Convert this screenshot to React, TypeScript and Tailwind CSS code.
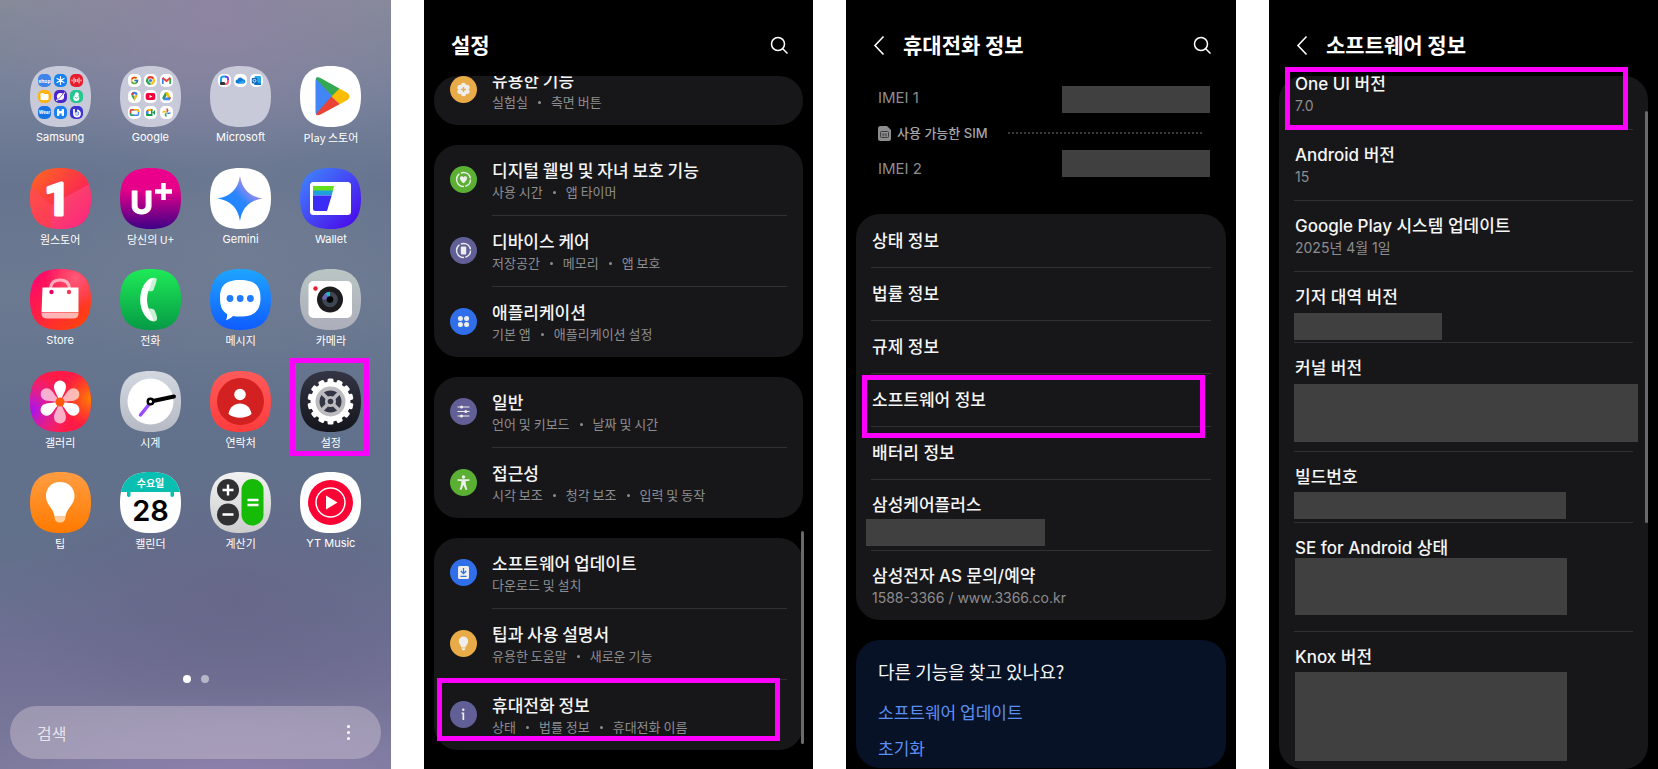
import type {ReactNode} from "react";
import {FcGoogle} from "react-icons/fc";

const SQUIRCLE = "M30.5 0C51.500 0 61 9.500 61 30.500S51.500 61 30.500 61 0 51.500 0 30.500 9.500 0 30.500 0Z";

export default function App() {
    return <main
        className="grid min-h-screen grid-cols-[391fr_389fr_390fr_389fr] gap-[33px] bg-white
            font-['Noto_Sans_CJK_KR',sans-serif]"
    >
        <SharedDefs/>
        <HomeScreen/>
        <SettingsScreen/>
        <AboutScreen/>
        <SoftwareScreen/>
    </main>
}

/* ---------- home ---------- */

interface AppEntry {
    name: string;
    icon: ReactNode;
    latin?: boolean;
    marked?: boolean;
}

const apps: AppEntry[] = [
    {name: "Samsung", icon: <SamsungFolder/>, latin: true},
    {name: "Google", icon: <GoogleFolder/>, latin: true},
    {name: "Microsoft", icon: <MicrosoftFolder/>, latin: true},
    {name: "Play 스토어", icon: <PlayIcon/>},
    {name: "원스토어", icon: <OneStoreIcon/>},
    {name: "당신의 U+", icon: <UplusIcon/>},
    {name: "Gemini", icon: <GeminiIcon/>, latin: true},
    {name: "Wallet", icon: <WalletIcon/>, latin: true},
    {name: "Store", icon: <StoreIcon/>, latin: true},
    {name: "전화", icon: <PhoneIcon/>},
    {name: "메시지", icon: <MessageIcon/>},
    {name: "카메라", icon: <CameraIcon/>},
    {name: "갤러리", icon: <GalleryIcon/>},
    {name: "시계", icon: <ClockIcon/>},
    {name: "연락처", icon: <ContactsIcon/>},
    {name: "설정", icon: <SettingsIcon/>, marked: true},
    {name: "팁", icon: <TipsIcon/>},
    {name: "캘린더", icon: <CalendarIcon/>},
    {name: "계산기", icon: <CalculatorIcon/>},
    {name: "YT Music", icon: <YtMusicIcon/>, latin: true},
];

function HomeScreen() {
    return <section
        className="flex flex-col
            bg-[radial-gradient(60%_20%_at_55%_2%,#8d84a2_0%,transparent_100%),radial-gradient(50%_16%_at_60%_33%,#707c92_0%,transparent_100%),radial-gradient(60%_16%_at_60%_78%,#67678a_0%,transparent_100%),radial-gradient(70%_12%_at_60%_102%,#8d80ad_0%,transparent_100%),linear-gradient(180deg,#858b98_0%,#76819a_12%,#66748f_24%,#6b7991_38%,#61708b_58%,#62708b_72%,#706f94_85%,#7b7a9b_100%)]"
    >
        <div className="mt-[66px] grid h-[485px] grid-cols-4 content-between px-[15px]">
            {apps.map(app => <button key={app.name} className="relative flex flex-col items-center gap-[2px]">
                {app.icon}
                <span
                    className={app.latin
                        ? "font-[Inter,'Noto_Sans_CJK_KR',sans-serif] text-[11px] leading-4 text-white"
                        : "text-[11px] leading-4 text-white"}
                >{app.name}</span>
                {app.marked && <Marker className="-top-[13px] -bottom-[6px] left-1 w-[79px]"/>}
            </button>)}
        </div>

        <div className="mt-[124px] flex justify-center gap-[10px]">
            <span className="size-2 rounded-full bg-white"/>
            <span className="size-2 rounded-full bg-white/50"/>
        </div>

        <div className="mx-[10px] mt-[23px] flex h-[53px] items-center rounded-full bg-[#cfc4d2]/45 pr-[27px] pl-[27px]">
            <input
                aria-label="검색"
                placeholder="검색"
                className="min-w-0 flex-1 bg-transparent text-base text-white outline-none placeholder:text-white/75"
            />
            <button aria-label="더보기" className="flex flex-col gap-[3px] px-1">
                <span className="size-[3px] rounded-full bg-white"/>
                <span className="size-[3px] rounded-full bg-white"/>
                <span className="size-[3px] rounded-full bg-white"/>
            </button>
        </div>
    </section>
}

/* ---------- settings ---------- */

function SettingsScreen() {
    return <section className="relative bg-black">
        <Header title="설정" search/>
        <div className="flex flex-col gap-5 px-[10px]">
            <div className="flex h-[49px] flex-col justify-end overflow-hidden rounded-3xl bg-[#17171a]">
                <SettingsRow
                    color="bg-[#e8ab47]" glyph={<FlowerGlyph/>}
                    title="유용한 기능" sub={["실험실", "측면 버튼"]}
                />
            </div>
            <div className="rounded-3xl bg-[#17171a]">
                <SettingsRow
                    color="bg-[#5bb034]" glyph={<WellbeingGlyph/>}
                    title="디지털 웰빙 및 자녀 보호 기능" sub={["사용 시간", "앱 타이머"]}
                />
                <SettingsRow
                    color="bg-[#615f96]" glyph={<DeviceGlyph/>}
                    title="디바이스 케어" sub={["저장공간", "메모리", "앱 보호"]}
                />
                <SettingsRow
                    color="bg-[#316fea]" glyph={<AppsGlyph/>}
                    title="애플리케이션" sub={["기본 앱", "애플리케이션 설정"]}
                />
            </div>
            <div className="rounded-3xl bg-[#17171a]">
                <SettingsRow
                    color="bg-[#615f96]" glyph={<SlidersGlyph/>}
                    title="일반" sub={["언어 및 키보드", "날짜 및 시간"]}
                />
                <SettingsRow
                    color="bg-[#5bb034]" glyph={<PersonGlyph/>}
                    title="접근성" sub={["시각 보조", "청각 보조", "입력 및 동작"]}
                />
            </div>
            <div className="rounded-3xl bg-[#17171a]">
                <SettingsRow
                    color="bg-[#316fea]" glyph={<UpdateGlyph/>}
                    title="소프트웨어 업데이트" sub={["다운로드 및 설치"]}
                />
                <SettingsRow
                    color="bg-[#e8ab47]" glyph={<BulbGlyph/>}
                    title="팁과 사용 설명서" sub={["유용한 도움말", "새로운 기능"]}
                />
                <SettingsRow
                    color="bg-[#615f96]" glyph={<InfoGlyph/>}
                    title="휴대전화 정보" sub={["상태", "법률 정보", "휴대전화 이름"]}
                    marked
                />
            </div>
        </div>
        <span className="absolute top-[531px] right-[9px] h-[213px] w-[3px] rounded-full bg-[#6a6a6c]"/>
    </section>
}

interface SettingsRowProps {
    color: string;
    glyph: ReactNode;
    title: string;
    sub: string[];
    marked?: boolean;
}

function SettingsRow({color, glyph, title, sub, marked}: SettingsRowProps) {
    return <button className="group relative flex w-full shrink-0 gap-[15px] px-4 text-left">
        <span className={`mt-[21px] size-[27px] shrink-0 rounded-full ${color}`}>
            <svg viewBox="0 0 27 27" className="size-full" fill="#eee" stroke="none">{glyph}</svg>
        </span>
        <span className="flex-1 border-b border-[#313133] py-[13px] group-last:border-b-0">
            <span className="block text-[17px] leading-6 font-medium text-[#f5f5f5]">{title}</span>
            <span className="flex gap-[10px] text-[13px] leading-5 text-[#8d8d8f]">
                {sub.map((part, i) => <span key={part} className="flex items-center gap-[10px]">
                    {i > 0 && <span className="size-[3px] rounded-full bg-[#8d8d8f]"/>}
                    {part}
                </span>)}
            </span>
        </span>
        {marked && <Marker className="-top-[2px] right-[23px] left-[3px] h-[63px]"/>}
    </button>
}

/* ---------- about phone ---------- */

function AboutScreen() {
    return <section className="bg-black">
        <Header title="휴대전화 정보" back search/>
        <div className="flex flex-col pr-[26px] pl-8 font-[Inter,'Noto_Sans_CJK_KR',sans-serif] text-[#8d8d8f]">
            <div className="flex justify-between pt-[10px]">
                <span className="text-[15px] leading-6">IMEI 1</span>
                <Redacted className="h-[27px] w-[148px]"/>
            </div>
            <div className="mt-[10px] mr-2 flex h-5 items-center">
                <SimIcon/>
                <span className="ml-[6px] text-[13px] leading-5 font-medium text-[#a5a5a7]">사용 가능한 SIM</span>
                <span className="ml-5 flex-1 border-b-2 border-dotted border-[#3a3a3c]"/>
            </div>
            <div className="mt-[7px] flex items-end justify-between">
                <span className="text-[15px] leading-4">IMEI 2</span>
                <Redacted className="h-[27px] w-[148px]"/>
            </div>
        </div>

        <div className="mx-[10px] mt-[37px] rounded-3xl bg-[#17171a] px-[15px] pt-px">
            <InfoRow title="상태 정보" single/>
            <InfoRow title="법률 정보" single/>
            <InfoRow title="규제 정보" single/>
            <InfoRow title="소프트웨어 정보" single>
                <Marker className="top-[1px] right-[6px] -left-[9px] h-[63px]"/>
            </InfoRow>
            <InfoRow title="배터리 정보" single/>
            <InfoRow title="삼성케어플러스" className="pb-1">
                <Redacted className="mt-[2px] -ml-[5px] h-[27px] w-[179px]"/>
            </InfoRow>
            <InfoRow title="삼성전자 AS 문의/예약" value="1588-3366 / www.3366.co.kr" className="pb-3"/>
        </div>

        <div className="mx-[10px] mt-5 flex flex-col rounded-3xl bg-[#081226] px-[22px] pt-[19px] pb-[2px]">
            <h2 className="mb-[11px] text-lg leading-6 text-[#f5f5f5]">다른 기능을 찾고 있나요?</h2>
            <a href="#update" className="text-[17px] leading-9 text-[#5c8ff5]">소프트웨어 업데이트</a>
            <a href="#reset" className="text-[17px] leading-9 text-[#5c8ff5]">초기화</a>
        </div>
    </section>
}

/* ---------- software info ---------- */

function SoftwareScreen() {
    return <section className="relative bg-black">
        <Header title="소프트웨어 정보" back/>
        <div className="mx-[10px] rounded-3xl bg-[#17171a] px-[15px]">
            <InfoRow title="One UI 버전" value="7.0" className="flex h-[54px] flex-col justify-end pb-[13px]">
                <Marker className="-top-[9px] right-[5px] -left-[9px] h-[63px]"/>
            </InfoRow>
            <InfoRow title="Android 버전" value="15" className="pb-[13px]"/>
            <InfoRow title="Google Play 시스템 업데이트" value="2025년 4월 1일" className="pb-[13px]"/>
            <InfoRow title="기저 대역 버전" className="pb-[2px]">
                <Redacted className="mt-1 h-[27px] w-[148px]"/>
            </InfoRow>
            <InfoRow title="커널 버전" className="pb-[9px]">
                <Redacted className="mt-1 -mr-[5px] h-[58px]"/>
            </InfoRow>
            <InfoRow title="빌드번호" className="pb-[3px]">
                <Redacted className="mt-[3px] h-[27px] w-[272px]"/>
            </InfoRow>
            <InfoRow title="SE for Android 상태" className="pb-4">
                <Redacted className="-mt-[2px] ml-px h-[57px] w-[272px]"/>
            </InfoRow>
            <InfoRow title="Knox 버전" className="pb-2">
                <Redacted className="mt-[3px] ml-px h-[89px] w-[272px]"/>
            </InfoRow>
        </div>
        <span className="absolute top-[111px] right-[10px] h-[412px] w-[3px] rounded-full bg-[#6a6a6c]"/>
    </section>
}

/* ---------- shared pieces ---------- */

function Header({title, back, search}: {title: string; back?: boolean; search?: boolean}) {
    return <header className="flex h-[76px] items-center pt-[13px] pr-[25px] pl-[27px] text-white">
        {back && <button aria-label="뒤로" className="mr-[10px] -ml-1">
            <svg viewBox="0 0 24 24" className="size-6" fill="none" stroke="currentColor" strokeWidth="1.6">
                <path d="M14.500 3.500 6 12.500l8.500 9"/>
            </svg>
        </button>}
        <h1 className="flex-1 pb-[2px] text-[21px] leading-8 font-bold">{title}</h1>
        {search && <button aria-label="검색">
            <svg viewBox="0 0 18 18" className="size-[18px]" fill="none" stroke="currentColor" strokeWidth="1.5">
                <circle cx="8" cy="8" r="6.500"/>
                <path d="m12.500 12.500 5 5"/>
            </svg>
        </button>}
    </header>
}

interface InfoRowProps {
    title: string;
    value?: string;
    single?: boolean;
    className?: string;
    children?: ReactNode;
}

function InfoRow({title, value, single, className = "", children}: InfoRowProps) {
    return <div
        className={`relative border-b border-[#313133] font-[Inter,'Noto_Sans_CJK_KR',sans-serif] last:border-b-0
            ${single ? "pt-[14px] pb-[14px]" : "pt-[13px]"} ${className}`}
    >
        <h3 className="pl-px text-[17px] leading-6 font-medium text-[#f5f5f5]">{title}</h3>
        {value && <p className="pl-px text-sm leading-5 text-[#8d8d8f]">{value}</p>}
        {children}
    </div>
}

function Redacted({className}: {className: string}) {
    return <div className={`bg-[#404040] ${className}`}/>
}

function Marker({className}: {className: string}) {
    return <span className={`pointer-events-none absolute border-[5px] border-[#ff00ff] ${className}`}/>
}

function SimIcon() {
    return <svg viewBox="0 0 13 15" className="h-[15px] w-[13px]">
        <path d="M2.500 0H9l4 4v8.500A2.500 2.500 0 0 1 10.500 15h-8A2.500 2.500 0 0 1 0 12.500v-10A2.500 2.500 0 0 1 2.500 0Z" fill="#8d8d8f"/>
        <rect x="2.500" y="5.500" width="8" height="6" rx="1" fill="#8d8d8f" stroke="#333" strokeWidth=".9"/>
        <path d="M5 7v3.500M8 7v3.500M4.500 8.800h4" stroke="#444" strokeWidth=".8"/>
    </svg>
}

/* ---------- settings glyphs (27x27) ---------- */

function FlowerGlyph() {
    return <>
        {[0, 60, 120, 180, 240, 300].map(a =>
            <circle key={a} cx="13.5" cy="9.300" r="2.500" transform={`rotate(${a} 13.5 13.5)`}/>)}
        <circle cx="13.5" cy="13.5" r="4"/>
        <path d="M13.500 11v5M11 13.500h5" stroke="#e8ab47" strokeWidth="1.300"/>
    </>
}

function WellbeingGlyph() {
    return <>
        <circle cx="13.5" cy="13.5" r="7" fill="none" stroke="#eee" strokeWidth="1.400" strokeDasharray="9 1.500 18 1.500 12.500 1.500"/>
        <path d="M13.500 17.200c-5-3.700-3.900-7-1.700-7 .9 0 1.400.5 1.700 1.100.3-.6.8-1.100 1.700-1.100 2.200 0 3.300 3.300-1.700 7Z"/>
    </>
}

function DeviceGlyph() {
    return <>
        <circle cx="13.5" cy="13.5" r="7" fill="none" stroke="#eee" strokeWidth="1.400" strokeDasharray="9 1.500 18 1.500 12.500 1.500"/>
        <rect x="10.800" y="9.500" width="5.400" height="8" rx="1"/>
    </>
}

function AppsGlyph() {
    return <>
        <circle cx="10.400" cy="10.400" r="2.500"/>
        <circle cx="16.600" cy="10.400" r="2.500"/>
        <circle cx="10.400" cy="16.600" r="2.500"/>
        <circle cx="16.600" cy="16.600" r="2.500"/>
    </>
}

function SlidersGlyph() {
    return <>
        <path d="M7.500 9h12M7.500 13.500h12M7.500 18h12" stroke="#eee" strokeWidth="1"/>
        <circle cx="11.500" cy="9" r="1.500"/>
        <circle cx="15.800" cy="13.500" r="1.500"/>
        <circle cx="11.500" cy="18" r="1.500"/>
    </>
}

function PersonGlyph() {
    return <>
        <circle cx="13.5" cy="8" r="1.700"/>
        <path d="M7.500 10.200h12v1.600l-3.900.5.300 3.200 1.400 5-1.600.4-2.200-4.900-2.200 4.900-1.600-.4 1.400-5 .3-3.200-3.900-.5Z"/>
    </>
}

function UpdateGlyph() {
    return <>
        <rect x="8" y="7" width="11" height="13" rx="1.500"/>
        <path d="M13.500 9v5.500M10.800 12l2.700 2.700 2.700-2.700M10.500 17.300h6" fill="none" stroke="#316fea" strokeWidth="1.300"/>
    </>
}

function BulbGlyph() {
    return <path d="M13.500 6.500a4.700 4.700 0 0 1 4.700 4.700c0 2.700-2.200 3.800-2.700 6.300h-4c-.5-2.500-2.700-3.600-2.700-6.300a4.700 4.700 0 0 1 4.700-4.700Zm-1.800 11.700h3.600c0 3-3.600 3-3.600 0Z"/>
}

function InfoGlyph() {
    return <>
        <circle cx="13.3" cy="8.700" r="1.200"/>
        <path d="M11.500 11.500h2.700v7.500h-1.700v-6.200h-1Z"/>
    </>
}

/* ---------- launcher icons (61x61) ---------- */

function SharedDefs() {
    return <svg className="absolute size-0" aria-hidden="true">
        <defs>
            <clipPath id="squircle"><path d={SQUIRCLE}/></clipPath>
            <clipPath id="playShape"><path d="M15.500 15q0-5.500 5-3L47.500 27q4 3.500 0 7L20.500 48.500q-5 2.500-5-3Z"/></clipPath>
            <Gradient id="gOne" from="#ff6a1f" to="#f6006f"/>
            <Gradient id="gUplus" from="#ec008c" to="#3d0087" vertical mid="#e6008a"/>
            <Gradient id="gWallet" from="#3f8bff" to="#4a00e8"/>
            <Gradient id="gGreen" from="#1fea57" to="#059a45" vertical/>
            <Gradient id="gBlue" from="#1fa5ff" to="#0f5bff" vertical/>
            <Gradient id="gCamera" from="#b9c5c3" to="#adaebb" vertical/>
            <Gradient id="gClock" from="#d3d7e0" to="#b6bac4" vertical/>
            <Gradient id="gRed" from="#ff5a5a" to="#ff3c3c" vertical/>
            <Gradient id="gDark" from="#333545" to="#14151c" vertical/>
            <Gradient id="gOrange" from="#ff9d42" to="#ff7a00" vertical/>
            <Gradient id="gCalc" from="#f2f2f2" to="#cdcdcd" vertical/>
            <Gradient id="gStore" from="#ff0078" to="#ff4a00"/>
            <linearGradient id="gGem" x1="0" y1="1" x2="1" y2="0">
                <stop offset="0" stopColor="#0a84ff"/>
                <stop offset=".5" stopColor="#2b86ff"/>
                <stop offset=".75" stopColor="#a98be8"/>
            </linearGradient>
            <radialGradient id="gPink" cx=".75" cy=".15" r=".5">
                <stop offset="0" stopColor="#ff5a78"/>
                <stop offset="1" stopColor="#ff5a78" stopOpacity="0"/>
            </radialGradient>
            <radialGradient id="gViolet" cx="0" cy=".65" r=".65">
                <stop offset="0" stopColor="#a010ff"/>
                <stop offset="1" stopColor="#e030b0" stopOpacity="0"/>
            </radialGradient>
            <radialGradient id="gAmber" cx="1" cy=".45" r=".5">
                <stop offset="0" stopColor="#ff8400"/>
                <stop offset="1" stopColor="#ff5a00" stopOpacity="0"/>
            </radialGradient>
        </defs>
    </svg>
}

function Gradient({id, from, mid, to, vertical}: {id: string; from: string; mid?: string; to: string; vertical?: boolean}) {
    return <linearGradient id={id} x1="0" y1="0" x2={vertical ? "0" : "1"} y2="1">
        <stop offset="0" stopColor={from}/>
        {mid && <stop offset=".35" stopColor={mid}/>}
        <stop offset="1" stopColor={to}/>
    </linearGradient>
}

function Tile({fill, children}: {fill: string; children?: ReactNode}) {
    return <svg viewBox="0 0 61 61" className="size-[61px]">
        <g clipPath="url(#squircle)">
            <rect width="61" height="61" fill={fill}/>
            {children}
        </g>
    </svg>
}

// one 13x13 app inside a folder, placed by column and row
function Mini({col, row, fill = "#fff", children}: {col: number; row: number; fill?: string; children?: ReactNode}) {
    return <g transform={`translate(${8 + col * 16} ${8 + row * 16})`}>
        <rect width="13" height="13" rx="5" fill={fill}/>
        {children}
    </g>
}

function SamsungFolder() {
    return <Tile fill="#c8c9d9">
        <Mini col={0} row={0} fill="#3f84e8">
            <text x="6.500" y="8.500" fontSize="5" fontWeight="700" textAnchor="middle" fill="#fff" fontFamily="Inter, sans-serif">shop</text>
        </Mini>
        <Mini col={1} row={0} fill="#1681f0">
            <path d="M6.500 2.500v8M3 4.500l7 4M10 4.500l-7 4" stroke="#fff" strokeWidth="1.200" strokeLinecap="round"/>
            <circle cx="6.500" cy="6.500" r="1.600" fill="#fff"/>
        </Mini>
        <Mini col={2} row={0} fill="#e81c2c">
            <path d="M2 6v1M4 4v5M5.700 5.500v2M7.300 5.500v2M9 4v5M11 6v1" stroke="#fff" strokeWidth=".9" strokeLinecap="round"/>
        </Mini>
        <Mini col={0} row={1} fill="#fbb414">
            <path d="M2.500 4q0-1 1-1h2l1 1H9.500q1 0 1 1v4q0 1-1 1h-6q-1 0-1-1Z" fill="#fff"/>
        </Mini>
        <Mini col={1} row={1} fill="#4a27c8">
            <circle cx="6.500" cy="6.500" r="3.600" fill="#fff"/>
            <path d="M2 10.500Q6 10 10.800 2.500" stroke="#fff" strokeWidth="1.100" fill="none"/>
            <path d="m4 9.500 5-5.500" stroke="#4a27c8" strokeWidth=".7"/>
        </Mini>
        <Mini col={2} row={1} fill="#23c78f">
            <circle cx="6.800" cy="4.300" r="2" fill="#fff"/>
            <circle cx="6.300" cy="8" r="3" fill="#fff"/>
            <path d="M4.500 7q2 2.500 4 0" stroke="#23c78f" strokeWidth=".8" fill="none"/>
        </Mini>
        <Mini col={0} row={2} fill="#1673e6">
            <text x="6.500" y="8.200" fontSize="4.500" fontWeight="700" textAnchor="middle" fill="#fff" fontFamily="Inter, sans-serif">Wear</text>
        </Mini>
        <Mini col={1} row={2} fill="#1a80f0">
            <rect x="3" y="3" width="2.400" height="7" rx="1" fill="#fff"/>
            <rect x="7.600" y="3" width="2.400" height="7" rx="1" fill="#fff"/>
            <rect x="4" y="5" width="5" height="2.500" fill="#fff"/>
        </Mini>
        <Mini col={2} row={2} fill="#3a33d0">
            <path d="M4 3v4.500a3 3 0 1 0 3-3" stroke="#fff" strokeWidth="1.800" fill="none"/>
            <circle cx="6.800" cy="7.500" r="1.800" fill="#bfe0ff"/>
        </Mini>
    </Tile>
}

function GoogleFolder() {
    return <Tile fill="#c8c9d9">
        <Mini col={0} row={0}><FcGoogle x={2} y={2} size={9}/></Mini>
        <Mini col={1} row={0}>
            <path d="M6.500 6.500 2.600 4.200A4.500 4.500 0 0 1 10.400 4.200Z" fill="#e33b2e"/>
            <path d="M6.500 6.500 10.400 4.200A4.500 4.500 0 0 1 6.500 11Z" fill="#fbc116"/>
            <path d="M6.500 6.500V11A4.500 4.500 0 0 1 2.600 4.200Z" fill="#28a24b"/>
            <circle cx="6.500" cy="6.500" r="2.200" fill="#fff"/>
            <circle cx="6.500" cy="6.500" r="1.600" fill="#2f7de9"/>
        </Mini>
        <Mini col={2} row={0}>
            <path d="M2.800 10V4.500" stroke="#4285f4" strokeWidth="1.800"/>
            <path d="M10.200 10V4.500" stroke="#34a853" strokeWidth="1.800"/>
            <path d="m2.500 3.800 4 3.200 4-3.200" stroke="#ea4335" strokeWidth="1.900" fill="none"/>
        </Mini>
        <Mini col={0} row={1}>
            <path d="M6.500 11.500C6 9 3.500 7.800 3.500 5a3 3 0 0 1 3-3.200Z" fill="#34a853"/>
            <path d="M6.500 11.500C7 9 9.500 7.800 9.500 5a3 3 0 0 0-3-3.200Z" fill="#fbbc04"/>
            <path d="M3.500 5a3 3 0 0 1 6-.5L6.500 6Z" fill="#4285f4"/>
            <path d="M3.500 5a3 3 0 0 1 2-2.900L6.500 5Z" fill="#ea4335"/>
            <circle cx="6.500" cy="5" r="1.100" fill="#fff"/>
        </Mini>
        <Mini col={1} row={1}>
            <rect x="1.700" y="3" width="9.600" height="7" rx="2" fill="#f5003a"/>
            <path d="m5.500 4.900 3 1.600-3 1.600Z" fill="#fff"/>
        </Mini>
        <Mini col={2} row={1}>
            <path d="M5 2.500h3L4 10.300 2.200 8Z" fill="#28a24b"/>
            <path d="M5 2.500h3l3 5.500H8Z" fill="#fbbc04"/>
            <path d="M4.500 7.500H11l-1.600 2.800H3.300Z" fill="#4285f4"/>
            <path d="m8.600 7.500 2.400.3-1.400 2.400Z" fill="#ea4335"/>
        </Mini>
        <Mini col={0} row={2}>
            <rect x="2.500" y="3.700" width="8" height="5.500" rx="1" fill="none" stroke="#4285f4" strokeWidth="1.400"/>
            <path d="M2.500 8V4.700q0-1 1-1H6" stroke="#ea4335" strokeWidth="1.400" fill="none"/>
            <path d="M6 3.700h3.500q1 0 1 1V6" stroke="#fbbc04" strokeWidth="1.400" fill="none"/>
            <path d="M2.500 7v1.200q0 1 1 1H6" stroke="#34a853" strokeWidth="1.400" fill="none"/>
        </Mini>
        <Mini col={1} row={2}>
            <path d="M4 3h4.500v2H4Z" fill="#fbbc04"/>
            <path d="M2 5h2.500v3H2Z" fill="#4285f4"/>
            <path d="m4.200 3-2.200 2.200h2.200Z" fill="#ea4335"/>
            <path d="M2 8h6.500v2H3q-1 0-1-1ZM8.500 3v7H7V3ZM8.500 6.500 11 4v5Z" fill="#169c46"/>
        </Mini>
        <Mini col={2} row={2}>
            <path d="M6.500 6.500V2a2.300 2.300 0 0 1 0 4.500Z" fill="#ea4335"/>
            <path d="M6.500 6.500H11a2.300 2.300 0 0 1-4.500 0Z" fill="#4285f4"/>
            <path d="M6.500 6.500V11a2.300 2.300 0 0 1 0-4.500Z" fill="#34a853"/>
            <path d="M6.500 6.500H2a2.300 2.300 0 0 1 4.500 0Z" fill="#fbbc04"/>
        </Mini>
    </Tile>
}

function MicrosoftFolder() {
    return <Tile fill="#c8c9d9">
        <Mini col={0} row={0}>
            <path d="M3 9V5q0-2.500 2.500-2.500h2" stroke="#1f9fe8" strokeWidth="2" fill="none"/>
            <path d="M7 2.800h1q2 0 2 2.200v1" stroke="#7a3ff0" strokeWidth="2" fill="none"/>
            <path d="M10 6v1.500Q10 10 7.500 10H6" stroke="#ff5a78" strokeWidth="2" fill="none"/>
            <rect x="2" y="8" width="5" height="3" rx="1" fill="#333"/>
        </Mini>
        <Mini col={1} row={0}>
            <path d="M3.500 9.500a2 2 0 0 1 0-4 3 3 0 0 1 5.500-.3 2.200 2.200 0 0 1 .8 4.300Z" fill="#1279d4"/>
            <path d="M3.500 9.500 9 6.500a2 2 0 0 1 .8 3Z" fill="#2aa7f0"/>
        </Mini>
        <Mini col={2} row={0}>
            <rect x="4.500" y="2" width="6.500" height="9" rx="1" fill="#28a8ea"/>
            <path d="m4.500 7 6.500 3v1h-6.500Z" fill="#0f6cc4"/>
            <rect x="1.800" y="4" width="5.400" height="5.400" rx=".8" fill="#0f62b8"/>
            <circle cx="4.500" cy="6.700" r="1.400" fill="none" stroke="#fff" strokeWidth=".8"/>
        </Mini>
    </Tile>
}

function PlayIcon() {
    return <Tile fill="#fff">
        <g clipPath="url(#playShape)">
            <path d="M15 8v44l17.500-21.500Z" fill="#4285f4"/>
            <path d="M15 8v4l17.500 18.500 7.500-7.500L22 8Z" fill="#34a853"/>
            <path d="m40 22-8.500 8.500 8.500 8.500 14-8.500Z" fill="#fbbc04"/>
            <path d="m15 49 16.500-18.500 8.500 8L22 54Z" fill="#ea4335"/>
        </g>
    </Tile>
}

function OneStoreIcon() {
    return <Tile fill="url(#gOne)">
        <path d="m0 17 21 20v24H0Z" fill="#ff4a5c" fillOpacity=".6"/>
        <path d="m21 37 40-22v46H21Z" fill="#ff5a9a" fillOpacity=".4"/>
        <text
            x="27.500" y="46.500" fontSize="45" fontWeight="700" textAnchor="middle"
            fill="#fff" stroke="#fff" strokeWidth="3" strokeLinejoin="round" fontFamily="Roboto, sans-serif"
        >1</text>
    </Tile>
}

function UplusIcon() {
    return <Tile fill="url(#gUplus)">
        <text
            x="21.500" y="45.500" fontSize="31" fontWeight="700" textAnchor="middle"
            fill="#fff" stroke="#fff" strokeWidth="1" strokeLinejoin="round" fontFamily="Inter, sans-serif"
        >U</text>
        <path d="M43.500 15v17M35 23.500h17" stroke="#fff" strokeWidth="4.500"/>
    </Tile>
}

function GeminiIcon() {
    return <Tile fill="#fff">
        <path d="M30 8q3 19.500 22.500 22.500Q33 33.500 30 53 27 33.500 7.500 30.500 27 27.500 30 8Z" fill="url(#gGem)"/>
    </Tile>
}

function WalletIcon() {
    return <Tile fill="url(#gWallet)">
        <rect x="10" y="14" width="41" height="33" rx="3.500" fill="#fff"/>
        <path d="M13 18h21l-1.200 5H13Z" fill="#62df1c"/>
        <path d="M13 22.500h20l-1.400 5H13Z" fill="#1f9ee0"/>
        <path d="M13 27.500h18.700L27 43H15.500q-2.500 0-2.500-2.500Z" fill="#3b2cf5"/>
    </Tile>
}

function StoreIcon() {
    return <Tile fill="url(#gStore)">
        <rect width="61" height="61" fill="url(#gPink)"/>
        <path d="M20.500 19q1-8 9.500-8t9.500 8" fill="none" stroke="#fff" strokeOpacity=".6" strokeWidth="3"/>
        <path d="M12.500 18.500h36V43h-37Z" fill="#fff"/>
        <path d="M11.500 43.500h37v1q0 5-5.500 5H17q-5.500 0-5.500-5Z" fill="#fff" fillOpacity=".65"/>
        <circle cx="21.500" cy="23" r="2.200" fill="#e5006c"/>
        <circle cx="39" cy="23" r="2.200" fill="#f23a5c"/>
    </Tile>
}

function PhoneIcon() {
    return <Tile fill="url(#gGreen)">
        <path d="M30 10q3-2 6.500-.500 1 1-3 11.500-1 2-5 1Z" fill="#c8f2d4"/>
        <path d="M29 39.500q4-.5 5.500 1.500 4 9 2 10.500-3 1.500-5 .500Z" fill="#c8f2d4"/>
        <path d="M30 9.500C17 18 17 43 30 51.500q3 1 3.500-.5L28.500 39c-2-5-2-12 0-17L33 9.500q-1.500-.5-3 0Z" fill="#fff"/>
    </Tile>
}

function MessageIcon() {
    return <Tile fill="url(#gBlue)">
        <path d="M30 11c15 0 20.500 6 20.500 18S45 47.500 30 47.500c-2.500 0-5-.1-7-.5-2 2-4.500 3.500-7 4 1-2 1.500-4 1-6C12 42 10 37 10 29c0-12 5-18 20-18Z" fill="#fff"/>
        <circle cx="20" cy="29.500" r="3.400" fill="#1f7bff"/>
        <circle cx="30.200" cy="29.500" r="3.400" fill="#1f7bff"/>
        <circle cx="40.400" cy="29.500" r="3.400" fill="#1f7bff"/>
    </Tile>
}

function CameraIcon() {
    return <Tile fill="url(#gCamera)">
        <rect x="8.500" y="12" width="43.500" height="37" rx="5" fill="#fff"/>
        <circle cx="15.500" cy="19.500" r="2.200" fill="#e2202c"/>
        <circle cx="30" cy="30.500" r="13" fill="#1c1c1e"/>
        <circle cx="30" cy="30.500" r="7.800" fill="#3e4652"/>
        <path d="M30 22.700a7.800 7.800 0 0 0-7.800 7.800H30Z" fill="#6d63b8"/>
        <path d="M30 22.700a7.800 7.800 0 0 0-4.500 1.500l4.500 6.300Z" fill="#23b5c9"/>
        <circle cx="30" cy="30.500" r="3.300" fill="#000"/>
    </Tile>
}

function GalleryIcon() {
    return <Tile fill="#ff1a48">
        <rect width="61" height="61" fill="url(#gViolet)"/>
        <rect width="61" height="61" fill="url(#gAmber)"/>
        {[60, 180, 300, 0, 120, 240].map(a => <path
            key={a}
            d="M28 27c-1-4-4-7-4-11.500a6 6 0 0 1 12 0c0 4.500-3 7.500-4 11.500Z"
            fill="#fff"
            fillOpacity={a % 120 === 0 ? 1 : 0.65}
            transform={`rotate(${a} 30 31)`}
        />)}
        <circle cx="30" cy="31" r="4.500" fill="#ff5a0a"/>
    </Tile>
}

function ClockIcon() {
    return <Tile fill="url(#gClock)">
        <circle cx="30.500" cy="30.500" r="23" fill="#fff"/>
        <path d="M29 33.500 20.500 44" stroke="#9a4bff" strokeWidth="3.500" strokeLinecap="round"/>
        <path d="m33 30 21-4.500" stroke="#000" strokeWidth="4" strokeLinecap="round"/>
        <circle cx="30.500" cy="30.500" r="2.800" fill="#fff" stroke="#000" strokeWidth="2.400"/>
    </Tile>
}

function ContactsIcon() {
    return <Tile fill="url(#gRed)">
        <circle cx="30.500" cy="30.500" r="23.500" fill="#d32020"/>
        <circle cx="30" cy="23.500" r="5.800" fill="#fff"/>
        <path d="M18.500 43c1-7 6-10.500 11.500-10.500S40.500 36 41.500 43c-6 5-17 5-23 0Z" fill="#fff"/>
    </Tile>
}

function SettingsIcon() {
    const teeth = Array.from({length: 14}, (_, i) => i * 360 / 14);
    return <Tile fill="url(#gDark)">
        {teeth.map(a => <rect
            key={a} x="27.500" y="7.500" width="6" height="8" rx="1.500" fill="#fff"
            transform={`rotate(${a} 30.500 30.500)`}
        />)}
        <circle cx="30.500" cy="30.500" r="20" fill="#fff"/>
        <circle cx="30.500" cy="30.500" r="15" fill="#bcbcc0"/>
        <circle cx="30.500" cy="30.500" r="11" fill="#333745"/>
        <path d="m21.500 21.500 18 18M39.500 21.500l-18 18" stroke="#bcbcc0" strokeWidth="3.500"/>
        <circle cx="30.500" cy="30.500" r="5.500" fill="#bcbcc0"/>
        <circle cx="30.500" cy="30.500" r="2.800" fill="#333745"/>
    </Tile>
}

function TipsIcon() {
    return <Tile fill="url(#gOrange)">
        <path d="M30 10c8.500 0 14.500 6 14.500 14 0 9-8 12-9 20.500h-11C23.500 36 16 33 16 24c0-8 5.500-14 14-14Z" fill="#fff"/>
        <path d="M24.500 44.500h11q0 6-5.500 6t-5.500-6Z" fill="#ffcf9e"/>
    </Tile>
}

function CalendarIcon() {
    return <Tile fill="#fff">
        <rect width="61" height="20" fill="#09bfb1"/>
        <rect x="7" y="17" width="3.500" height="8" rx="1.700" fill="#09bfb1"/>
        <rect x="50.500" y="17" width="3.500" height="8" rx="1.700" fill="#09bfb1"/>
        <text x="30.500" y="15" fontSize="10" fontWeight="700" textAnchor="middle" fill="#fff" fontFamily="'Noto Sans CJK KR', sans-serif">수요일</text>
        <text x="30.500" y="49" fontSize="29" fontWeight="600" textAnchor="middle" fill="#000" fontFamily="Inter, sans-serif">28</text>
    </Tile>
}

function CalculatorIcon() {
    return <Tile fill="url(#gCalc)">
        <circle cx="18" cy="18" r="11" fill="#303032"/>
        <circle cx="18" cy="42.500" r="11" fill="#303032"/>
        <rect x="31.500" y="7" width="22" height="46.500" rx="11" fill="#15bb06"/>
        <path d="M18 12.500v11M12.500 18h11M12.500 42.500h11M37.500 28h11M37.500 33h11" stroke="#fff" strokeWidth="2.400"/>
    </Tile>
}

function YtMusicIcon() {
    return <Tile fill="#fff">
        <circle cx="30.500" cy="30.500" r="22.500" fill="#fb0334"/>
        <circle cx="30.500" cy="30.500" r="14.500" fill="none" stroke="#fff" strokeWidth="1.500"/>
        <path d="m26 23.500 11.500 7L26 37.500Z" fill="#fff"/>
    </Tile>
}
